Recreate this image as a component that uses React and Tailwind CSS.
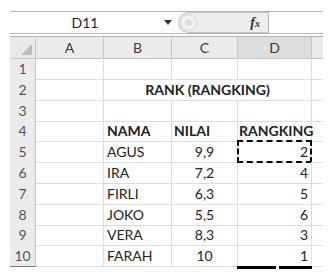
import React from "react";

const cols = ["A", "B", "C", "D"];

const rows = [
  { n: 1 },
  { n: 2, title: "RANK (RANGKING)" },
  { n: 3 },
  { n: 4, b: "NAMA", c: "NILAI", d: "RANGKING", head: true },
  { n: 5, b: "AGUS", c: "9,9", d: "2", marquee: true },
  { n: 6, b: "IRA", c: "7,2", d: "4" },
  { n: 7, b: "FIRLI", c: "6,3", d: "5" },
  { n: 8, b: "JOKO", c: "5,5", d: "6" },
  { n: 9, b: "VERA", c: "8,3", d: "3" },
  { n: 10, b: "FARAH", c: "10", d: "1", last: true },
];

const gridCols = "grid grid-cols-[26px_68px_68px_66px_74px_11px]";

function FormulaBar() {
  return (
    <div className="flex h-[23px] border-y border-[#b4b4b4] bg-white">
      <div className="flex w-[150px] items-center justify-center text-[14px] text-[#222]">D11</div>
      <div className="flex w-[16px] items-center justify-center">
        <svg width="8" height="5" viewBox="0 0 8 5">
          <path d="M0 0h8L4 5z" fill="#333" />
        </svg>
      </div>
      <div className="ml-[2px] flex w-[90px] items-center rounded-l-full border border-r-0 border-[#c4c4c4] bg-[#ededed]">
        <div className="ml-[1px] flex h-[17px] w-[17px] items-center justify-center rounded-full border border-[#cfcfcf] bg-[#f2f2f2]">
          <div className="h-[7px] w-[7px] rounded-full bg-[#e0e0e0]" />
        </div>
        <div className="flex-1" />
        <span className="mr-[8px] font-['Liberation_Serif',serif] text-[14px] font-bold italic text-[#333]">
          f<span className="text-[10px]">x</span>
        </span>
      </div>
      <div className="flex-1 border-l border-[#b4b4b4]" />
    </div>
  );
}

function Header() {
  return (
    <div className={`${gridCols} h-[22px] border-t border-[#b4b4b4]`}>
      <div className="relative border-r border-b border-[#c6c6c6] bg-[#e9e9e9]">
        <svg className="absolute bottom-[3px] right-[3px]" width="11" height="11" viewBox="0 0 11 11">
          <path d="M11 0V11H0z" fill="#bdbdbd" />
        </svg>
      </div>
      {cols.map((c) => (
        <div
          key={c}
          className={`flex items-center justify-center border-r border-b border-[#c6c6c6] text-[14px] text-[#3a3a3a] ${
            c === "D" ? "bg-[#dcdcdc]" : "bg-[#ebebeb]"
          }`}
        >
          {c}
        </div>
      ))}
      <div className="border-b border-[#c6c6c6] bg-[#ebebeb]" />
    </div>
  );
}

function Row({ r }) {
  const cell = "h-full border-r border-b border-[#dcdcdc] flex items-center";
  return (
    <div className={`${gridCols} h-[20.8px]`}>
      <div
        className={`flex items-center justify-center border-r border-b bg-[#ebebeb] text-[14px] text-[#555] ${
          r.last ? "border-b-[#7a7a7a] border-r-[#c6c6c6]" : "border-[#c6c6c6]"
        }`}
      >
        {r.n}
      </div>
      <div className={cell} />
      {r.title ? (
        <div className="col-span-3 flex h-full items-center justify-center border-r border-b border-[#dcdcdc] text-[14px] font-bold text-[#222]">
          {r.title}
        </div>
      ) : (
        <>
          <div className={`${cell} pl-[3px] text-[14px] text-[#222] ${r.head ? "font-bold" : ""}`}>{r.b}</div>
          <div
            className={`${cell} text-[14px] text-[#222] ${
              r.head ? "pl-[2px] font-bold" : "justify-center"
            }`}
          >
            {r.c}
          </div>
          <div
            className={`${cell} relative text-[14px] text-[#222] ${
              r.head ? "pl-[1px] font-bold" : "justify-end pr-[3px]"
            }`}
          >
            {r.d}
            {r.marquee && (
              <div className="absolute inset-x-[-1px] top-[-1px] bottom-[-1px] border-2 border-dashed border-black" />
            )}
            {r.last && (
              <div className="absolute left-[-1px] right-[-1px] bottom-[-3px] flex h-[3px]">
                <div className="w-[39px] bg-black" />
                <div className="w-[3px] bg-white" />
                <div className="flex-1 bg-black" />
              </div>
            )}
          </div>
        </>
      )}
      <div className="border-b border-[#dcdcdc]" />
    </div>
  );
}

export default function App() {
  return (
    <div className="h-[277px] w-[328px] overflow-hidden bg-white pl-[10px] pt-[11px] font-['Lato','Liberation_Sans',sans-serif]">
      <div className="w-[313px]">
        <FormulaBar />
        <div className="h-[2px]" />
        <Header />
        {rows.map((r) => (
          <Row key={r.n} r={r} />
        ))}
      </div>
    </div>
  );
}
